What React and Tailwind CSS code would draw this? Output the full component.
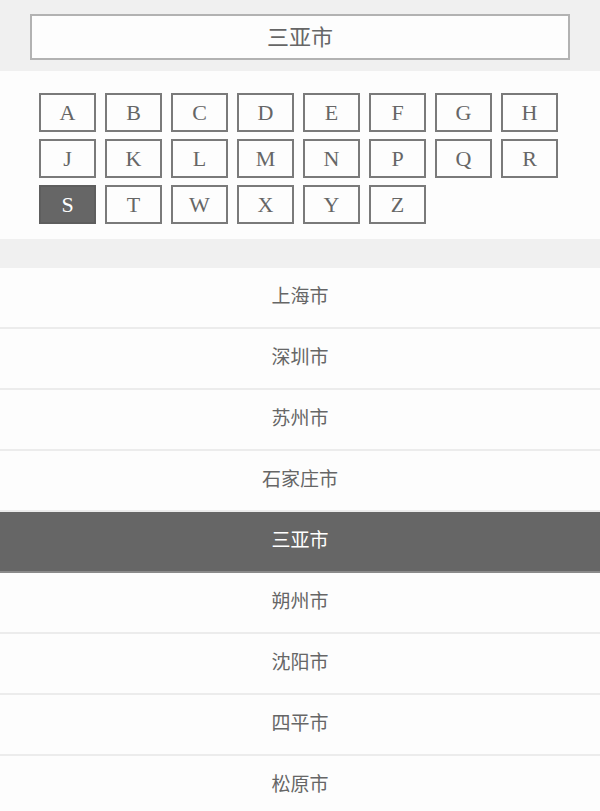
import { useState } from 'react';

const letters = ['A', 'B', 'C', 'D', 'E', 'F', 'G', 'H', 'J', 'K', 'L', 'M', 'N', 'P', 'Q', 'R', 'S', 'T', 'W', 'X', 'Y', 'Z'];

const cities = ['上海市', '深圳市', '苏州市', '石家庄市', '三亚市', '朔州市', '沈阳市', '四平市', '松原市'];

const cjk = { fontFamily: '"Noto Sans CJK SC", "Noto Sans", sans-serif' };

const App = () => {
  const [letter, setLetter] = useState('S');
  const [city, setCity] = useState('三亚市');

  return (
    <div className="w-[600px] h-[811px] overflow-hidden bg-[#f0f0f0]">
      <div className="h-[71px] px-[30px] pt-[14px]">
        <div
          className="h-[46px] border-2 border-[#b2b2b2] bg-[#fdfdfd] flex items-center justify-center pb-[4px] text-[22px] leading-none text-[#666]"
          style={cjk}
        >
          {city}
        </div>
      </div>

      <div className="h-[168px] bg-[#fdfdfd] pl-[39px] pt-[22px]">
        <div className="grid grid-cols-[repeat(8,57px)] gap-x-[9px] gap-y-[7px]">
          {letters.map((l) => (
            <button
              key={l}
              type="button"
              onClick={() => setLetter(l)}
              className={`h-[39px] border-2 flex items-center justify-center text-[22px] leading-none ${
                l === letter ? 'bg-[#666] border-[#5e5e5e] text-white' : 'bg-[#fdfdfd] border-[#7a7a7a] text-[#666]'
              }`}
              style={{ fontFamily: '"Liberation Serif", serif' }}
            >
              {l}
            </button>
          ))}
        </div>
      </div>

      <div className="h-[29px]" />

      <ul style={cjk}>
        {cities.map((c) => (
          <li key={c}>
            <button
              type="button"
              onClick={() => setCity(c)}
              className={`w-full h-[61px] border-b-2 flex items-center justify-center pb-[6px] text-[19px] leading-none ${
                c === city ? 'bg-[#666] border-[#8a8a8a] text-white' : 'bg-[#fdfdfd] border-[#ececec] text-[#666]'
              }`}
            >
              {c}
            </button>
          </li>
        ))}
      </ul>
    </div>
  );
};

export default App;
